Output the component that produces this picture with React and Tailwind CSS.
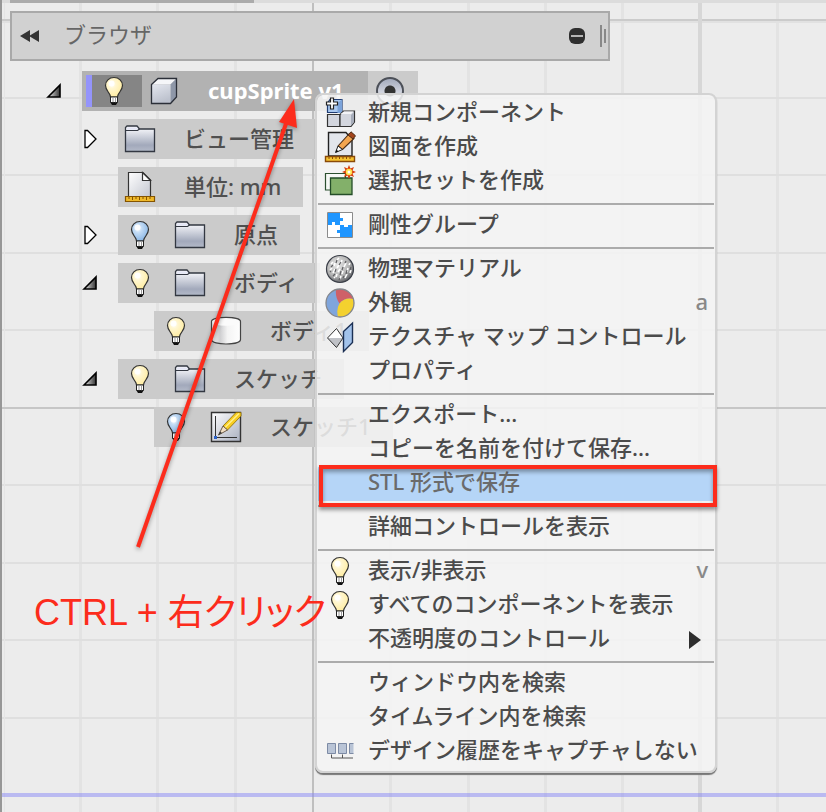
import React, { useId } from "react";

const MINOR_X = [80, 157, 235, 390, 468, 545, 622, 777];
const MINOR_Y = [98, 175, 253, 330, 485, 563, 640, 718];

function CanvasGrid() {
  return (
    <svg className="absolute top-0 -left-0.5 h-full w-[calc(100%+2px)]" aria-hidden="true">
      {MINOR_X.map((x) => (
        <rect key={x} x={x - 1} y="0" width="3" height="100%" fill="#e3e3e3" />
      ))}
      {MINOR_Y.map((y) => (
        <rect key={y} x="0" y={y - 1} width="100%" height="2" fill="#dfdfdf" />
      ))}
      <rect x="4" y="0" width="1" height="100%" fill="#e5e5e5" />
      <rect x="0" y="19" width="100%" height="2" fill="#cbcbcb" />
      <rect x="0" y="21" width="100%" height="2" fill="#e1e1e1" />
      <rect x="0" y="407" width="100%" height="2" fill="#c6c6c6" />
      <rect x="312" y="0" width="2" height="100%" fill="#bfbfbf" />
      <rect x="698" y="0" width="4" height="100%" fill="#d7d7d7" />
      <rect x="0" y="793" width="100%" height="4" fill="#8888f5" opacity="0.5" />
      <rect x="0" y="0" width="2" height="100%" fill="#979797" />
    </svg>
  );
}

function Bulb({ off = false }) {
  const id = useId();
  return (
    <svg width="22" height="32" viewBox="0 0 22 32" className="shrink-0" aria-hidden="true">
      <defs>
        <radialGradient id={id} cx="0.38" cy="0.35" r="0.75">
          <stop offset="0" stopColor="#ffffff" />
          <stop offset="0.3" stopColor={off ? "#c4dcf5" : "#fff6d0"} />
          <stop offset="1" stopColor={off ? "#7fafe2" : "#ffeb98"} />
        </radialGradient>
      </defs>
      <path
        d="M11 2.500C6 2.500 2.500 6 2.500 10.500c0 4 3.200 6.500 4.500 9.500l.5 2h7l.5-2c1.300-3 4.500-5.500 4.500-9.500C19.500 6 16 2.500 11 2.500Z"
        fill={`url(#${id})`}
        stroke="#333"
        strokeWidth="1.200"
      />
      <circle cx="8.500" cy="8.500" r="3" fill="#fff" opacity="0.9" />
      <path d="M7.500 22h7v5.500h-7z" fill="#fff" stroke="#222" />
      <path d="M10 22.500v5M12.500 22.500v5" stroke="#999" />
      <path d="M7.500 27.500h7L13 30H9z" fill="#111" />
    </svg>
  );
}

function Folder() {
  const id = useId();
  return (
    <svg width="32" height="28" viewBox="0 0 32 28" className="shrink-0" aria-hidden="true">
      <defs>
        <linearGradient id={id} x1="0" y1="0" x2="0" y2="1">
          <stop offset="0.1" stopColor="#f4f5f9" />
          <stop offset="0.75" stopColor="#a2a9bb" />
          <stop offset="1" stopColor="#b4bac9" />
        </linearGradient>
      </defs>
      <path d="M1.500 26.500V2.500L3 1h10l2.500 3h15v22.500Z" fill={`url(#${id})`} stroke="#333842" strokeWidth="1.300" />
      <path d="M2 5.500h11.500l2-1.500" fill="none" stroke="#333842" strokeWidth="1.200" />
      <path d="M3 2.500h10l1 1.200-1 .8H3z" fill="#e4e6f6" />
    </svg>
  );
}

function DocRuler() {
  return (
    <svg width="32" height="32" viewBox="0 0 32 32" className="shrink-0" aria-hidden="true">
      <defs>
        <linearGradient id="docFill" x1="0" y1="0" x2="1" y2="1">
          <stop offset="0" stopColor="#fff" />
          <stop offset="1" stopColor="#c3c6d0" />
        </linearGradient>
      </defs>
      <path d="M4.500 26V1.500H19L26.500 9v17Z" fill="url(#docFill)" stroke="#333" strokeWidth="1.200" />
      <path d="M18.500 1.500V9.500H26.500Z" fill="#fff" stroke="#333" strokeWidth="1.200" />
      <path d="M1.500 25.500h29v5h-29z" fill="#efb92b" stroke="#855400" strokeWidth="1.200" />
      <path d="M5 26v2M8.500 26v3M12 26v2M15.500 26v3M19 26v2M22.500 26v3M26 26v2" stroke="#855400" />
    </svg>
  );
}

function Cube() {
  return (
    <svg width="28" height="28" viewBox="0 0 28 28" className="shrink-0" aria-hidden="true">
      <defs>
        <linearGradient id="cubeFront" x1="0" y1="0" x2="0.4" y2="1">
          <stop offset="0" stopColor="#e4e7ef" />
          <stop offset="1" stopColor="#bcc1cd" />
        </linearGradient>
      </defs>
      <path d="M1.500 7.500 8 1.500h18.500l-6 6Z" fill="#f5f6f9" />
      <path d="M20.500 7.500l6-6V20l-6 6.500Z" fill="#8e97a8" />
      <path d="M1.500 7.500h19v19h-19z" fill="url(#cubeFront)" />
      <path d="M1.500 7.500 8 1.500h18.500V20l-6 6.500h-19Z" fill="none" stroke="#2b2f38" strokeWidth="1.300" />
    </svg>
  );
}

function Cylinder() {
  return (
    <svg width="32" height="30" viewBox="0 0 32 30" className="shrink-0" aria-hidden="true">
      <defs>
        <linearGradient id="cylFill" x1="0" y1="0" x2="1" y2="0">
          <stop offset="0" stopColor="#fafafa" />
          <stop offset="0.3" stopColor="#cfcfd1" />
          <stop offset="0.55" stopColor="#f4f4f4" />
          <stop offset="1" stopColor="#fff" />
        </linearGradient>
      </defs>
      <path d="M1.500 5.500v18c0 6 29 6 29 0v-18Z" fill="url(#cylFill)" />
      <ellipse cx="16" cy="5.500" rx="14.500" ry="4.200" fill="#fbfbfb" />
      <path d="M1.500 5.500c0-5.500 29-5.500 29 0v18c0 6-29 6-29 0Z" fill="none" stroke="#444" strokeWidth="1.200" />
    </svg>
  );
}

function SketchIcon() {
  return (
    <svg width="32" height="32" viewBox="0 0 32 32" className="shrink-0" aria-hidden="true">
      <defs>
        <linearGradient id="skFill" x1="0" y1="0" x2="1" y2="1">
          <stop offset="0" stopColor="#fff" />
          <stop offset="1" stopColor="#a9afbf" />
        </linearGradient>
      </defs>
      <path d="M1.500 1.500h29v29h-29z" fill="url(#skFill)" stroke="#333" strokeWidth="1.400" />
      <path d="M5.500 5v21.500H27" fill="none" stroke="#333" />
      <path d="M4 25h3v3H4z" fill="#2c62c8" />
      <path d="M13 15 26 1.500h5V5L17.500 19Z" fill="#f8cd22" stroke="#8a6a00" strokeWidth="0.800" />
      <path d="M15 16.500 29 2.500" stroke="#fff08c" strokeWidth="1.500" />
      <path d="M13 15 8.500 24l9-5Z" fill="#f3dfc3" stroke="#5a4a38" strokeWidth="0.900" />
      <path d="m8.500 24 1.500-3.500 2 1.600Z" fill="#333" />
    </svg>
  );
}

function NewComponent() {
  return (
    <svg width="32" height="32" viewBox="0 0 32 32" aria-hidden="true">
      <path d="M6 2.500h12v13H3.500V6Z" fill="#a9c8f0" stroke="#1f3c73" strokeWidth="1.200" />
      <path d="M13.500 6 18 2.500V16h-4.500Z" fill="#7ba3da" />
      <path d="M3.500 17.500H16v12H3.500z" fill="#d3d6de" stroke="#333" strokeWidth="1.200" />
      <path d="M16 17.500 19.500 14h11v11L27 29.500H16Z" fill="#d3d6de" stroke="#333" strokeWidth="1.200" />
      <path d="M16.500 17 20 14.500h9.500L27 17Z" fill="#f3f4f7" />
      <path d="M27 18l3-3v10l-3 3.500Z" fill="#a7adba" />
      <path d="M6.500 1h3v4h4v3h-4v4h-3V8h-4V5h4z" fill="#fff" stroke="#222" strokeWidth="1.200" />
    </svg>
  );
}

function DrawingIcon() {
  return (
    <svg width="32" height="32" viewBox="0 0 32 32" aria-hidden="true">
      <path d="M4.500 25V1.500H22l6 7V25Z" fill="#e3e6ec" stroke="#222" strokeWidth="1.400" />
      <path d="M14 15 25 3l5 4.500L18.500 18.500Z" fill="#f3a54f" stroke="#4a2b13" strokeWidth="1.100" />
      <path d="m24 4 3-3.200 4.500 4L29 8Z" fill="#a3441c" stroke="#4a2b13" />
      <path d="M14 15l-2.500 6.500 7-3Z" fill="#fff" stroke="#222" />
      <path d="m11.500 21.500 1-3 2 2Z" fill="#111" />
      <path d="M1.500 25.500h29v5h-29z" fill="#f6c332" stroke="#8a4a08" strokeWidth="1.400" />
      <path d="M5 26v2M8.500 26v2M12 26v2M15.500 26v2M19 26v2M22.500 26v2M26 26v2" stroke="#8a4a08" />
    </svg>
  );
}

function SelectionSet() {
  return (
    <svg width="32" height="32" viewBox="0 0 32 32" aria-hidden="true">
      <path d="M1.500 8.500h20V25h-20z" fill="#f6f8f6" stroke="#2c5030" strokeWidth="1.200" />
      <path d="M6.500 13h21.500v16.500H6.500z" fill="#83b06a" stroke="#244d28" strokeWidth="1.300" />
      <path d="m25 0 1.500 3.500L30 2l-1.500 3.500L32 7l-3.500 1.500L30 12l-3.500-1.500L25 14l-1.500-3.500L20 12l1.500-3.500L18 7l3.500-1.500L20 2l3.500 1.500Z" fill="#d9400c" />
      <circle cx="25" cy="7" r="3.200" fill="#ffe44d" />
      <circle cx="25" cy="7" r="1.500" fill="#fff" />
    </svg>
  );
}

function RigidGroup() {
  return (
    <svg width="28" height="28" viewBox="0 0 28 28" aria-hidden="true">
      <path d="M1.500 1.500h25v25h-25z" fill="#fff" />
      <path d="M2 2h12v5h3v3h-3v4H9v-3H6v3H2z" fill="#1f96ff" />
      <path d="M26 26H14v-4h-3v-3h3v-5h4v2h4v-2h4z" fill="#1f96ff" />
      <path d="M1.500 1.500h25v25h-25z" fill="none" stroke="#8b8b8b" />
    </svg>
  );
}

function Material() {
  return (
    <svg width="30" height="30" viewBox="0 0 30 30" aria-hidden="true">
      <defs>
        <radialGradient id="matFill" cx="0.4" cy="0.35" r="0.7">
          <stop offset="0" stopColor="#e8e8e8" />
          <stop offset="0.6" stopColor="#b5b5b5" />
          <stop offset="1" stopColor="#55575c" />
        </radialGradient>
      </defs>
      <circle cx="15" cy="15" r="13.500" fill="url(#matFill)" stroke="#3b3f48" strokeWidth="1.200" />
      <path
        d="M6 10l2-2M9 12l1-3M5 16l2-2M8 19l2-4M11 23l1-3M12 14l2-3M16 9l1-3M13 18l2-3M19 13l2-4M17 20l1-3M22 18l1-4M20 24l2-4M9 24l1-1M12 6l2-2M15 25l1-3M24 11l1-2M25 19l1-3"
        stroke="#fff"
        strokeWidth="1.600"
      />
      <path
        d="M6 13l2-2M11 9l1-3M10 18l1-3M15 21l1-4M20 9l1-2M21 20l1-4M14 26l1-2M25 16l1-3M5 18l1-1M14 11l2-3M17 16l1-3M8 22l2-2M18 24l1-2"
        stroke="#606063"
        strokeWidth="1.200"
      />
    </svg>
  );
}

function Appearance() {
  return (
    <svg width="32" height="32" viewBox="0 0 32 32" aria-hidden="true">
      <circle cx="16" cy="16" r="14" fill="#7fa5dc" />
      <path d="M12 2.600A14 14 0 0 1 29.500 12Q21 10 15.500 16.500 11 10 12 2.600Z" fill="#cf6068" />
      <path d="M29.500 12A14 14 0 0 1 14 29.800Q12 22 15.500 16.500 21 10 29.500 12Z" fill="#f4d12f" />
      <circle cx="16" cy="16" r="14" fill="none" stroke="#85878c" strokeWidth="1.300" />
    </svg>
  );
}

function TextureMap() {
  return (
    <svg width="32" height="32" viewBox="0 0 32 32" aria-hidden="true">
      <path d="M3.500 17 12.500 7.500 19 17l-6.500 9.500Z" fill="#fff" />
      <path d="M3.500 17H19l-6.500 9.500Z" fill="#bfc1c6" />
      <path d="M3.500 17 12.500 7.500 19 17l-6.500 9.500Z" fill="none" stroke="#333" />
      <path d="M19.500 10.500 28.500 2v19.500L19.500 30.500Z" fill="#a2c2ea" stroke="#1c3054" strokeWidth="1.400" />
    </svg>
  );
}

function HistoryIcon() {
  return (
    <svg width="28" height="20" viewBox="0 0 28 20" aria-hidden="true">
      <path d="M1.500 2.500h8v10h-8zM12.500 2.500h8v10h-8z" fill="#b9c4d6" stroke="#7d8ba5" />
      <path d="M27.500 2.500h-4v10h4" fill="#b9c4d6" stroke="#7d8ba5" />
      <path d="M5.500 13.500v3.500H27M16.500 13.500V17" fill="none" stroke="#555" />
    </svg>
  );
}

function Disclosure({ open }) {
  return open ? (
    <svg width="16" height="16" viewBox="0 0 16 16" aria-hidden="true">
      <defs>
        <linearGradient id="discFill" x1="0" y1="0" x2="1" y2="0">
          <stop offset="0" stopColor="#eee" />
          <stop offset="1" stopColor="#333" />
        </linearGradient>
      </defs>
      <path d="M2 14 14 2v12Z" fill="url(#discFill)" stroke="#000" strokeWidth="1.600" />
    </svg>
  ) : (
    <svg width="16" height="20" viewBox="0 0 16 20" aria-hidden="true">
      <path d="M3 1.500h2.500L14 10l-8.500 8.500H3Z" fill="#fff" stroke="#000" strokeWidth="1.300" />
    </svg>
  );
}

function Slot({ children }) {
  return <span className="mr-1.5 flex w-11 shrink-0 justify-center">{children}</span>;
}

const CHILD_ROWS = [
  { label: "ビュー管理", icon: <Folder />, toggle: "closed", indent: "pl-[82px]" },
  { label: "単位: mm", icon: <DocRuler />, indent: "pl-[82px]" },
  { label: "原点", icon: <Folder />, bulb: "off", toggle: "closed", indent: "pl-[82px]" },
  { label: "ボディ", icon: <Folder />, bulb: "on", toggle: "open", indent: "pl-[82px]" },
  { label: "ボディ1", icon: <Cylinder />, bulb: "on", indent: "pl-[118px]" },
  { label: "スケッチ", icon: <Folder />, bulb: "on", toggle: "open", indent: "pl-[82px]" },
  { label: "スケッチ1", icon: <SketchIcon />, bulb: "off", indent: "pl-[118px]" },
];

function TreeToggle({ state, label }) {
  return (
    <span className="mr-5 flex w-4 shrink-0 justify-center">
      {state && (
        <button type="button" aria-label={label} aria-expanded={state === "open"}>
          <Disclosure open={state === "open"} />
        </button>
      )}
    </span>
  );
}

function BrowserTree() {
  return (
    <ul className="mt-2.5 flex flex-col gap-2 text-[22px] leading-8 font-medium whitespace-nowrap text-[#505050]">
      <li className="flex h-10 items-center pl-[46px]">
        <TreeToggle state="open" label="cupSprite v1" />
        <div className="flex h-10 items-center bg-[#b2b2b2] pr-6 pl-1">
          <span className="h-8 w-1.5 bg-[#9494fb]" />
          <span className="flex h-8 items-center bg-[#858585]">
            <Slot><Bulb /></Slot>
          </span>
          <Slot><Cube /></Slot>
          <span className="pb-0.5 pl-4 font-bold text-white">cupSprite v1</span>
        </div>
        <label className="flex h-10 w-[50px] items-center bg-[#cbcbcb] pl-2">
          <input
            type="radio"
            name="active"
            defaultChecked
            aria-label="cupSprite v1"
            className="h-7 w-7 appearance-none rounded-full border-2 border-[#4c5058] bg-[radial-gradient(circle,#333_0_5px,transparent_6px),linear-gradient(#a4abbd,#f4f4f8)]"
          />
        </label>
      </li>
      {CHILD_ROWS.map((row) => (
        <li key={row.label} className={`flex h-10 items-center ${row.indent}`}>
          <TreeToggle state={row.toggle} label={row.label} />
          <div className="flex h-10 items-center bg-[#cbcbcb] pr-[22px]">
            {row.bulb && <Slot><Bulb off={row.bulb === "off"} /></Slot>}
            <Slot>{row.icon}</Slot>
            <span className="pb-0.5 pl-4">{row.label}</span>
          </div>
        </li>
      ))}
    </ul>
  );
}

const MENU_GROUPS = [
  [
    { label: "新規コンポーネント", icon: <NewComponent /> },
    { label: "図面を作成", icon: <DrawingIcon /> },
    { label: "選択セットを作成", icon: <SelectionSet /> },
  ],
  [{ label: "剛性グループ", icon: <RigidGroup /> }],
  [
    { label: "物理マテリアル", icon: <Material /> },
    { label: "外観", icon: <Appearance />, hint: "a" },
    { label: "テクスチャ マップ コントロール", icon: <TextureMap /> },
    { label: "プロパティ" },
  ],
  [
    { label: "エクスポート..." },
    { label: "コピーを名前を付けて保存..." },
    { label: "STL 形式で保存", active: true },
  ],
  [{ label: "詳細コントロールを表示" }],
  [
    { label: "表示/非表示", icon: <Bulb />, hint: "v" },
    { label: "すべてのコンポーネントを表示", icon: <Bulb /> },
    { label: "不透明度のコントロール", submenu: true },
  ],
  [
    { label: "ウィンドウ内を検索" },
    { label: "タイムライン内を検索" },
    { label: "デザイン履歴をキャプチャしない", icon: <HistoryIcon /> },
  ],
];

function MenuItem({ item }) {
  return (
    <button
      type="button"
      role="menuitem"
      className={`relative flex h-[34px] w-full items-center pr-1.5 text-left ${
        item.active ? "bg-[#b5d5f7] text-[#6b6b6b]" : ""
      }`}
    >
      <span className="mr-1.5 flex w-11 shrink-0 justify-center pb-0.5">{item.icon}</span>
      <span className="pb-1.5">{item.label}</span>
      {item.hint && <span className="ml-auto pb-1.5 text-[#888]">{item.hint}</span>}
      {item.submenu && (
        <svg width="14" height="18" viewBox="0 0 14 18" className="mr-1.5 ml-auto" aria-hidden="true">
          <path d="M1 0 13 9 1 18Z" fill="#2e2e2e" />
        </svg>
      )}
      {item.active && (
        <span className="absolute -top-0.5 -right-[3px] -bottom-1.5 left-px z-10 border-4 border-[#fc2c1c] shadow-[0_3px_4px_rgba(0,0,0,0.4),inset_0_3px_4px_rgba(0,0,0,0.35)]" />
      )}
    </button>
  );
}

function ContextMenu() {
  return (
    <div
      role="menu"
      className="absolute top-[93px] left-[315px] w-[402px] rounded-lg border-2 border-[#d3d3d3] bg-[#f5f5f5]/85 bg-clip-padding px-px py-0.5 text-[22px] leading-7 font-medium whitespace-nowrap text-[#4b4b4b] shadow-[0_2px_1px_#777]"
    >
      {MENU_GROUPS.map((group, index) => (
        <React.Fragment key={group[0].label}>
          {index > 0 && <div role="separator" className="my-1 h-0.5 bg-[#ababab]" />}
          {group.map((item) => (
            <MenuItem key={item.label} item={item} />
          ))}
        </React.Fragment>
      ))}
    </div>
  );
}

function Annotation() {
  return (
    <>
      <svg width="200" height="470" viewBox="0 0 200 470" className="pointer-events-none absolute top-[90px] left-[120px] drop-shadow-[0_2px_2px_rgba(0,0,0,0.35)]" aria-hidden="true">
        <path d="M18 457 168 28" stroke="#fc2c1c" strokeWidth="4" />
        <path d="M174 9 177 38 159 32Z" fill="#fc2c1c" />
      </svg>
      <p className="pointer-events-none absolute top-[590px] left-[34px] font-['Liberation_Sans','Noto_Sans_CJK_JP',sans-serif] text-[36px] leading-[46px] whitespace-nowrap text-[#fc2c1c] [font-feature-settings:'palt']">
        CTRL + 右クリック
      </p>
    </>
  );
}

export default function App() {
  return (
    <main className="relative min-h-screen overflow-hidden border-l-2 border-[#979797] bg-[#ececec] font-['Noto_Sans','Noto_Sans_CJK_JP',sans-serif]">
      <CanvasGrid />
      <div className="absolute inset-0 -left-0.5">
        <div className="flex h-[3px] bg-[#dcdcdc] pl-2.5">
          <span className="w-[244px] bg-[#ababab]" />
        </div>
        <header className="mt-2 ml-2.5 flex h-[50px] w-[600px] items-center border-2 border-[#a9a9a9] bg-[#d1d1d1] pr-0.5 pl-2 text-[22px] leading-8 text-[#666]">
          <button type="button" aria-label="折りたたむ">
            <svg width="20" height="12" viewBox="0 0 20 12" aria-hidden="true">
              <path d="M0 6 10 0v12ZM9 6l10-6v12Z" fill="#333" />
            </svg>
          </button>
          <h1 className="mb-1 ml-6">ブラウザ</h1>
          <button type="button" aria-label="最小化" className="ml-auto">
            <svg width="16" height="16" viewBox="0 0 16 16" aria-hidden="true">
              <rect width="16" height="16" rx="6" fill="#2f2f2f" />
              <path d="M2 7h12v2H2z" fill="#b5b5b5" />
            </svg>
          </button>
          <span className="ml-[15px] flex items-center gap-0.5">
            <span className="h-[22px] w-0.5 bg-[#888]" />
            <span className="h-3.5 w-0.5 bg-[#888]" />
          </span>
        </header>
        <BrowserTree />
        <ContextMenu />
        <Annotation />
      </div>
    </main>
  );
}
